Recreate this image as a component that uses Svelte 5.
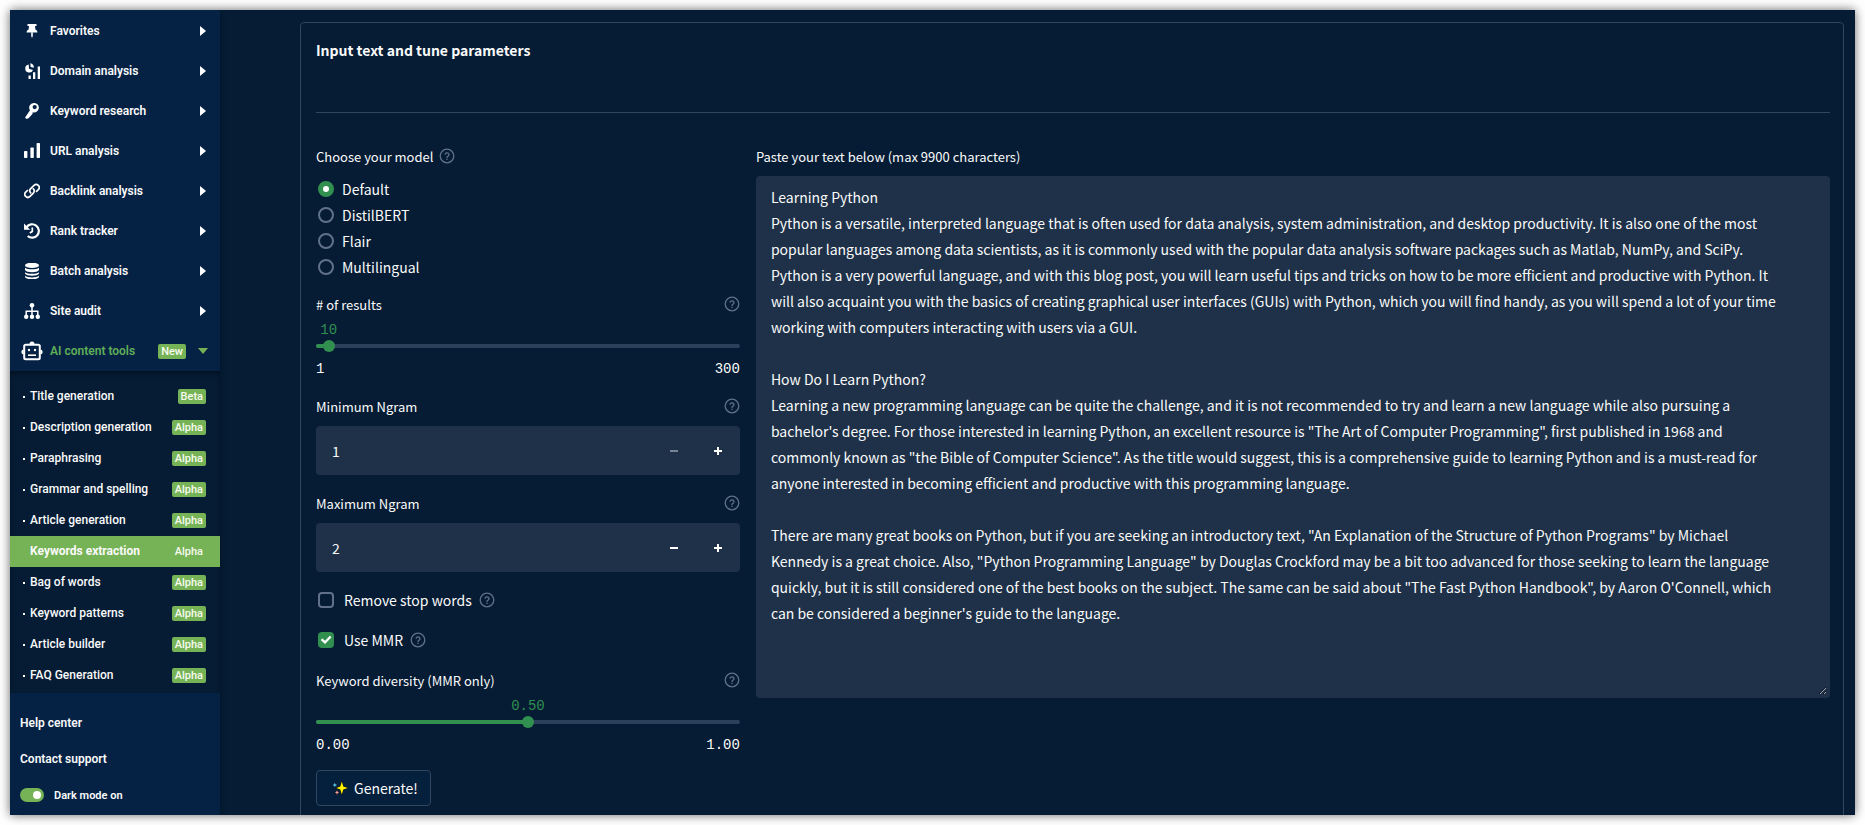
<script>
  const uid = $props.id();

  const sections = [
    { label: 'Favorites', icon: 'pin' },
    { label: 'Domain analysis', icon: 'domain' },
    { label: 'Keyword research', icon: 'key' },
    { label: 'URL analysis', icon: 'bars' },
    { label: 'Backlink analysis', icon: 'link' },
    { label: 'Rank tracker', icon: 'history' },
    { label: 'Batch analysis', icon: 'database' },
    { label: 'Site audit', icon: 'sitemap' },
  ];

  const tools = [
    { label: 'Title generation', tag: 'Beta' },
    { label: 'Description generation', tag: 'Alpha' },
    { label: 'Paraphrasing', tag: 'Alpha' },
    { label: 'Grammar and spelling', tag: 'Alpha' },
    { label: 'Article generation', tag: 'Alpha' },
    { label: 'Keywords extraction', tag: 'Alpha', active: true },
    { label: 'Bag of words', tag: 'Alpha' },
    { label: 'Keyword patterns', tag: 'Alpha' },
    { label: 'Article builder', tag: 'Alpha' },
    { label: 'FAQ Generation', tag: 'Alpha' },
  ];

  const models = ['Default', 'DistilBERT', 'Flair', 'Multilingual'];

  let model = $state('Default');
  let results = $state(10);
  let minNgram = $state(1);
  let maxNgram = $state(2);
  let removeStopWords = $state(false);
  let useMmr = $state(true);
  let diversity = $state(0.5);
  let darkMode = $state(true);
  let text = $state(
    `Learning Python
Python is a versatile, interpreted language that is often used for data analysis, system administration, and desktop productivity. It is also one of the most popular languages among data scientists, as it is commonly used with the popular data analysis software packages such as Matlab, NumPy, and SciPy. Python is a very powerful language, and with this blog post, you will learn useful tips and tricks on how to be more efficient and productive with Python. It will also acquaint you with the basics of creating graphical user interfaces (GUIs) with Python, which you will find handy, as you will spend a lot of your time working with computers interacting with users via a GUI.

How Do I Learn Python?
Learning a new programming language can be quite the challenge, and it is not recommended to try and learn a new language while also pursuing a bachelor's degree. For those interested in learning Python, an excellent resource is "The Art of Computer Programming", first published in 1968 and commonly known as "the Bible of Computer Science". As the title would suggest, this is a comprehensive guide to learning Python and is a must-read for anyone interested in becoming efficient and productive with this programming language.

There are many great books on Python, but if you are seeking an introductory text, "An Explanation of the Structure of Python Programs" by Michael Kennedy is a great choice. Also, "Python Programming Language" by Douglas Crockford may be a bit too advanced for those seeking to learn the language quickly, but it is still considered one of the best books on the subject. The same can be said about "The Fast Python Handbook", by Aaron O'Connell, which can be considered a beginner's guide to the language.`
  );

  const resultsFill = $derived(((results - 1) / 299) * 100);
  const diversityFill = $derived(diversity * 100);
</script>

{#snippet help()}
  <button type="button" class="help" aria-label="Help">
    <svg viewBox="0 0 16 16" width="16" height="16" fill="none" stroke="currentColor" stroke-linecap="round">
      <circle cx="8" cy="8" r="6.8" stroke-width="1.3" />
      <path d="M6.1 6.2a2 2 0 0 1 3.9.6c0 1.3-2 1.5-2 2.6" stroke-width="1.3" />
      <path d="M8 11.3v.1" stroke-width="1.4" />
    </svg>
  </button>
{/snippet}

{#snippet navIcon(name)}
  <svg class="nav-icon" viewBox="0 0 16 16" width="16" height="16" fill="currentColor" aria-hidden="true">
    {#if name === 'pin'}
      <path d="M3.500 1h9v2H11l.4 3.400c1.300.7 2 1.600 2 3.100H2.600c0-1.500.7-2.400 2-3.100L5 3H3.500z" />
      <path d="M7.200 9.300h1.600v3.700L8 15l-.8-2z" />
    {:else if name === 'domain'}
      <path d="M4.700 1.600A4 4 0 1 0 9 6.900L5 5.800z" />
      <path d="M6.300.200A3.900 3.900 0 0 1 9.800 4.700L6.600 4z" />
      <path d="M4.500 12.500h2.300V16H4.500zM9 9.200h2.300V16H9zM13.700 3.600H16V16h-2.300z" />
    {:else if name === 'key'}
      <path
        fill-rule="evenodd"
        d="M9.700 0a4.700 4.700 0 1 1-.8 9.200l-.5.700.3.800L4.800 15c-.7.700-2 .9-3 .4l-.7-.9L6 7.300A4.700 4.700 0 0 1 9.700 0zm1 2a2.100 2.100 0 1 0 0 4.200 2.100 2.100 0 0 0 0-4.200z"
      />
    {:else if name === 'bars'}
      <rect x="0" y="8" width="3.400" height="7" rx=".8" />
      <rect x="6.400" y="4.500" width="3.400" height="10.500" rx=".8" />
      <rect x="12.600" y="0" width="3.400" height="15" rx=".8" />
    {:else if name === 'link'}
      <g fill="none" stroke="currentColor" stroke-width="1.700" stroke-linecap="round">
        <path d="M6.700 9.900a3 3 0 0 1 0-4.200l3.300-3.300a3 3 0 0 1 4.300 4.300l-1.700 1.600" />
        <path d="M9.300 5.900a3 3 0 0 1 0 4.200L6 13.400a3 3 0 0 1-4.300-4.300l1.700-1.600" />
      </g>
    {:else if name === 'history'}
      <path
        fill="none"
        stroke="currentColor"
        stroke-width="2.200"
        d="M2.600 4.200A6.700 6.700 0 1 1 3.700 13"
      />
      <path d="M0 .6v6.200h6.200z" />
      <path fill="none" stroke="currentColor" stroke-width="1.700" d="M8.300 4.500v4L5.800 10" />
    {:else if name === 'database'}
      <ellipse cx="8" cy="2.400" rx="7" ry="2.700" />
      <path d="M1 4.700c2.500 2.200 11.500 2.200 14 0v2.200c-1.500 3-12.500 3-14 0z" />
      <path d="M1 9.200c2.500 2.200 11.500 2.200 14 0v1.200c-1.500 3-12.500 3-14 0z" />
      <path d="M1 12.800c2.500 2.200 11.500 2.200 14 0v1.200c-1.500 3-12.500 3-14 0z" />
    {:else if name === 'sitemap'}
      <circle cx="8" cy="2.300" r="2.300" />
      <circle cx="2.200" cy="13.700" r="2.200" />
      <circle cx="8" cy="13.700" r="2.200" />
      <circle cx="13.800" cy="13.700" r="2.200" />
      <path fill="none" stroke="currentColor" stroke-width="1.500" d="M8 3v10M2.200 13V8.300h11.600V13" />
    {/if}
  </svg>
{/snippet}

{#snippet sliderValue(id, fill, shown)}
  <output class="slider-value" for={id} style:left="{fill}%">{shown}</output>
{/snippet}

<div class="window">
  <aside class="sidebar">
    <nav>
      <ul class="sections">
        {#each sections as section}
          <li>
            <button type="button" class="section">
              <span class="icon-box">{@render navIcon(section.icon)}</span>
              <span>{section.label}</span>
              <span class="caret-right"></span>
            </button>
          </li>
        {/each}
        <li>
          <button type="button" class="section open" aria-expanded="true">
            <span class="icon-box">
              <svg viewBox="0 0 22 20" width="22" height="20" aria-hidden="true">
                <rect x="3.200" y="3.800" width="15.600" height="14.400" rx="1.500" fill="none" stroke="currentColor" stroke-width="2" />
                <path fill="currentColor" d="M8.500 3a2.500 2.500 0 0 1 5 0v1h-5zM2.600 8.500v5A2.500 2.500 0 0 1 .3 11a2.500 2.500 0 0 1 2.300-2.500zM19.400 8.500v5a2.500 2.500 0 0 0 2.300-2.500 2.500 2.500 0 0 0-2.300-2.500z" />
                <circle cx="8" cy="9" r="1.200" fill="currentColor" />
                <circle cx="14" cy="9" r="1.200" fill="currentColor" />
                <path stroke="currentColor" stroke-width="1.600" d="M7 14.200h8" />
              </svg>
            </span>
            <span>AI content tools</span>
            <span class="tag">New</span>
            <span class="caret-down"></span>
          </button>
        </li>
      </ul>
      <ul class="tools">
        {#each tools as tool}
          <li>
            <a href="#tool" class="tool" class:active={tool.active}>
              <span class="dot"></span>
              <span class="tool-name">{tool.label}</span>
              <span class="tag">{tool.tag}</span>
            </a>
          </li>
        {/each}
      </ul>
    </nav>
    <div class="footer">
      <a href="#help">Help center</a>
      <a href="#support">Contact support</a>
      <label class="dark-mode">
        <input type="checkbox" role="switch" bind:checked={darkMode} />
        Dark mode on
      </label>
    </div>
  </aside>

  <main>
    <form class="card" onsubmit={(e) => e.preventDefault()}>
      <h1>Input text and tune parameters</h1>
      <hr />
      <div class="columns">
        <div class="params">
          <div class="models" role="radiogroup" aria-labelledby="{uid}-model">
            <div class="label-row inline">
              <span id="{uid}-model">Choose your model</span>
              {@render help()}
            </div>
            {#each models as name}
              <label class="radio">
                <input type="radio" name="{uid}-models" value={name} bind:group={model} />
                {name}
              </label>
            {/each}
          </div>

          <div class="field">
            <div class="label-row">
              <label for="{uid}-results"># of results</label>
              {@render help()}
            </div>
            <div class="slider">
              {@render sliderValue(`${uid}-results`, resultsFill, results)}
              <div class="track"><div class="fill" style:width="{resultsFill}%"></div></div>
              <input id="{uid}-results" type="range" min="1" max="300" bind:value={results} />
            </div>
            <div class="range"><span>1</span><span>300</span></div>
          </div>

          <div class="field">
            <div class="label-row">
              <label for="{uid}-min">Minimum Ngram</label>
              {@render help()}
            </div>
            <div class="stepper">
              <input id="{uid}-min" type="number" min="1" bind:value={minNgram} />
              <button type="button" class="minus" aria-label="Decrease" disabled={minNgram <= 1} onclick={() => minNgram--}></button>
              <button type="button" class="plus" aria-label="Increase" onclick={() => minNgram++}></button>
            </div>
          </div>

          <div class="field">
            <div class="label-row">
              <label for="{uid}-max">Maximum Ngram</label>
              {@render help()}
            </div>
            <div class="stepper">
              <input id="{uid}-max" type="number" min="1" bind:value={maxNgram} />
              <button type="button" class="minus" aria-label="Decrease" disabled={maxNgram <= 1} onclick={() => maxNgram--}></button>
              <button type="button" class="plus" aria-label="Increase" onclick={() => maxNgram++}></button>
            </div>
          </div>

          <div class="check-row">
            <label class="check"><input type="checkbox" bind:checked={removeStopWords} />Remove stop words</label>
            {@render help()}
          </div>
          <div class="check-row">
            <label class="check"><input type="checkbox" bind:checked={useMmr} />Use MMR</label>
            {@render help()}
          </div>

          <div class="field">
            <div class="label-row">
              <label for="{uid}-diversity">Keyword diversity (MMR only)</label>
              {@render help()}
            </div>
            <div class="slider">
              {@render sliderValue(`${uid}-diversity`, diversityFill, diversity.toFixed(2))}
              <div class="track"><div class="fill" style:width="{diversityFill}%"></div></div>
              <input id="{uid}-diversity" type="range" min="0" max="1" step="0.01" bind:value={diversity} />
            </div>
            <div class="range"><span>0.00</span><span>1.00</span></div>
          </div>

          <button type="submit" class="generate">
            <svg viewBox="0 0 16 16" width="16" height="16" aria-hidden="true" stroke="#0a0d12" stroke-width="1" paint-order="stroke">
              <path fill="#fff200" d="M9.800 1.500l1.500 4.900 4.500 1.600-4.500 1.600-1.500 4.900-1.500-4.900L4.300 8l4-1.600z" />
              <path fill="#4fc8f0" d="M2.800 2.500l.7 1.800 1.900.7-1.900.7-.7 1.900-.7-1.900L.300 5l1.800-.7z" />
              <path fill="#f5a3a0" d="M5 10.200l.7 1.500 1.600.7-1.600.7L5 14.900l-.7-1.800-1.500-.7 1.500-.7z" />
            </svg>
            Generate!
          </button>
        </div>

        <div class="paste">
          <div class="label-row"><label for="{uid}-text">Paste your text below (max 9900 characters)</label></div>
          <textarea id="{uid}-text" rows="19" maxlength="9900" spellcheck="false" bind:value={text}></textarea>
        </div>
      </div>
    </form>
  </main>
</div>

<style>
  :global(body) {
    margin: 0;
    background: #fff;
  }

  .window {
    display: flex;
    height: calc(100vh - 20px);
    margin: 10px;
    overflow: hidden;
    background: #051c34;
    color: #fafafa;
    box-shadow: 0 0 10px rgba(0, 0, 0, 0.6);
  }

  .window,
  button,
  input,
  textarea {
    font-family: 'Noto Sans CJK SC', 'Open Sans', sans-serif;
    font-size: 14px;
  }

  button,
  input,
  textarea {
    margin: 0;
    padding: 0;
    border: 0;
    background: none;
    color: inherit;
  }

  ul {
    list-style: none;
    margin: 0;
    padding: 0;
  }

  /* sidebar */

  .sidebar {
    flex: none;
    width: 210px;
    background: #052245;
    box-shadow: 0 0 6px rgba(0, 0, 0, 0.3);
    font-family: Roboto, sans-serif;
    font-size: 12px;
    font-weight: 500;
  }

  .sections {
    padding-top: 1px;
  }

  .section {
    display: flex;
    align-items: center;
    width: 100%;
    height: 40px;
    padding: 0 14px 0 10px;
    font-family: inherit;
    font-size: 12px;
    font-weight: 600;
    cursor: pointer;
  }

  .icon-box {
    display: flex;
    justify-content: center;
    width: 24px;
    margin-right: 6px;
    color: #fff;
  }

  .open {
    color: #5fae57;
  }

  .caret-right {
    margin-left: auto;
    border-left: 6px solid #fff;
    border-top: 5px solid transparent;
    border-bottom: 5px solid transparent;
  }

  .caret-down {
    margin-left: 12px;
    margin-right: -2px;
    border-top: 6px solid #76b356;
    border-left: 5px solid transparent;
    border-right: 5px solid transparent;
  }

  .tag {
    margin-left: auto;
    padding: 0 3px;
    border-radius: 2px;
    background: #76b356;
    color: #f6fbf0;
    font-size: 11px;
    font-weight: 500;
    line-height: 15px;
  }

  .tools {
    padding: 10px 0 2px;
    background: #051c34;
    box-shadow: inset 0 4px 6px -2px rgba(0, 0, 0, 0.45);
  }

  .tool {
    display: flex;
    align-items: center;
    height: 31px;
    padding: 0 14px 0 13px;
    color: inherit;
    text-decoration: none;
  }

  .tool-name {
    padding-bottom: 2px;
  }

  .dot {
    width: 2px;
    height: 2px;
    margin-right: 5px;
    background: #fff;
  }

  .active {
    background: #76b356;
    font-weight: 700;
  }

  .active .dot {
    background: none;
  }

  .footer {
    display: flex;
    flex-direction: column;
    padding: 12px 10px;
  }

  .footer a,
  .dark-mode {
    display: flex;
    align-items: center;
    height: 36px;
    color: inherit;
    font-weight: 600;
    text-decoration: none;
  }

  .dark-mode {
    gap: 10px;
    font-size: 11px;
  }

  .dark-mode input {
    appearance: none;
    display: flex;
    justify-content: flex-start;
    box-sizing: border-box;
    width: 24px;
    height: 14px;
    padding: 3px;
    border-radius: 7px;
    background: #5b6b80;
  }

  .dark-mode input::before {
    content: '';
    width: 8px;
    height: 8px;
    border-radius: 50%;
    background: #fff;
  }

  .dark-mode input:checked {
    justify-content: flex-end;
    background: #76b356;
  }

  /* form */

  main {
    flex: 1;
    min-width: 0;
    padding: 12px 11px 0 80px;
  }

  .card {
    padding: 14px 13px 14px 15px;
    border: 1px solid #30475f;
    border-radius: 4px;
  }

  h1 {
    margin: 0;
    font-size: 14px;
    font-weight: 700;
    line-height: 26px;
  }

  hr {
    height: 1px;
    margin: 49px 0 31px;
    border: 0;
    background: #30475f;
  }

  .columns {
    display: grid;
    grid-template-columns: 28% minmax(0, 1fr);
    gap: 16px;
  }

  .label-row {
    display: flex;
    align-items: center;
    justify-content: space-between;
    height: 24px;
    margin-bottom: 8px;
    font-size: 13px;
  }

  .label-row.inline {
    justify-content: flex-start;
    gap: 6px;
  }

  .help {
    display: flex;
    color: #61718a;
    cursor: pointer;
  }

  .models {
    margin-bottom: 12px;
  }

  .radio,
  .check {
    display: flex;
    align-items: center;
    gap: 8px;
    height: 26px;
    padding-left: 2px;
  }

  .radio input,
  .check input {
    appearance: none;
    display: grid;
    place-items: center;
    box-sizing: border-box;
    width: 16px;
    height: 16px;
    border: 2px solid #61718a;
    border-radius: 50%;
  }

  .radio input:checked {
    border: 5px solid #318f50;
    background: #fff;
  }

  .check {
    gap: 10px;
  }

  .check input {
    border-radius: 4px;
  }

  .check input:checked {
    border-color: #318f50;
    background: #318f50;
  }

  .check input:checked::before {
    content: '';
    width: 12px;
    height: 10px;
    background: #fff;
    clip-path: polygon(6% 50%, 20% 34%, 42% 58%, 82% 8%, 96% 22%, 42% 90%);
  }

  .check-row {
    display: flex;
    align-items: center;
    gap: 7px;
    height: 24px;
    margin-bottom: 16px;
  }

  .field {
    margin-bottom: 16px;
  }

  .slider {
    position: relative;
    padding-top: 18px;
    margin-top: -2px;
    font-family: 'Liberation Mono', monospace;
  }

  .slider-value {
    position: absolute;
    top: 0;
    transform: translateX(-50%);
    color: #318f50;
    font-size: 14px;
    line-height: 16px;
  }

  .track {
    height: 4px;
    margin: 4px 0;
    border-radius: 2px;
    background: #2b405a;
  }

  .fill {
    height: 4px;
    border-radius: 2px;
    background: #318f50;
  }

  /* wider than the track by one thumb, so the thumb's centre reaches both ends */
  .slider input {
    appearance: none;
    display: block;
    width: calc(100% + 12px);
    height: 12px;
    margin: -12px -6px 0;
    position: relative;
  }

  .slider input::-webkit-slider-thumb {
    appearance: none;
    width: 12px;
    height: 12px;
    border-radius: 50%;
    background: #318f50;
  }

  .range {
    display: flex;
    justify-content: space-between;
    margin-top: 8px;
    font-family: 'Liberation Mono', monospace;
    font-size: 14px;
    line-height: 18px;
  }

  .stepper {
    display: flex;
    height: 49px;
    border-radius: 4px;
    background: #1e3148;
    overflow: hidden;
  }

  .stepper input {
    flex: 1;
    min-width: 0;
    padding: 0 16px;
    appearance: textfield;
  }

  .stepper input::-webkit-inner-spin-button {
    appearance: none;
  }

  .stepper button {
    display: grid;
    place-content: center;
    place-items: center;
    width: 44px;
    cursor: pointer;
  }

  .stepper button:disabled {
    opacity: 0.4;
  }

  .minus::before,
  .plus::before,
  .plus::after {
    content: '';
    grid-area: 1 / 1;
    width: 8px;
    height: 2px;
    background: #fff;
  }

  .plus::after {
    width: 2px;
    height: 8px;
  }

  .generate {
    display: flex;
    align-items: center;
    gap: 6px;
    height: 36px;
    padding: 0 12px 0 15px;
    border: 1px solid #30475f;
    border-radius: 4px;
    background: #05203c;
    cursor: pointer;
  }

  /* the border keeps the resize handle off the rounded corner */
  textarea {
    display: block;
    box-sizing: border-box;
    width: 100%;
    padding: 5px 39px 17px 12px;
    border: 3px solid #1e3148;
    border-radius: 4px;
    background: #1e3148;
    color: #fafafa;
    color-scheme: dark;
    line-height: 26px;
    resize: vertical;
    overflow: auto;
  }
</style>
